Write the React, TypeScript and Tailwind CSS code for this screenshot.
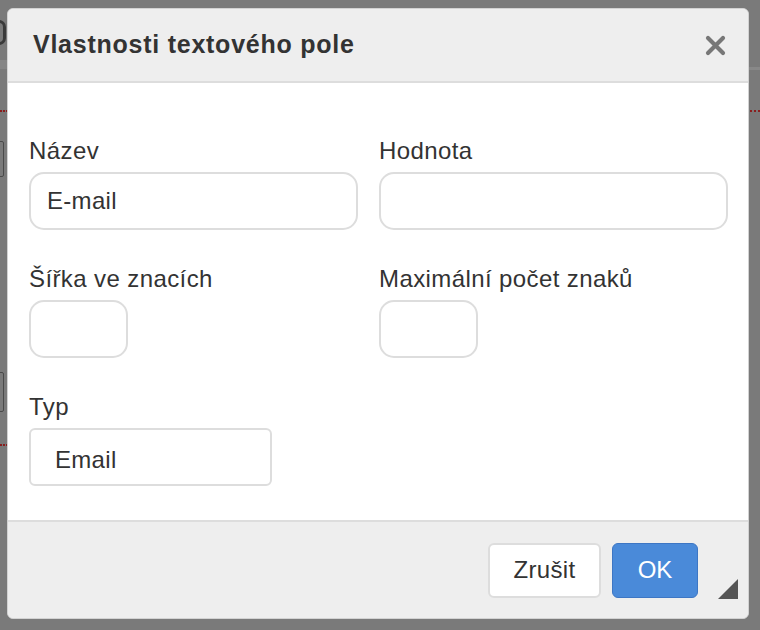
import React from "react";

const font = { fontFamily: '"Liberation Sans", Arial, sans-serif' };

function Field({
  label,
  value,
  className,
}: {
  label: string;
  value?: string;
  className: string;
}) {
  return (
    <div className="flex flex-col">
      <label className="h-[28px] leading-[28px] text-[24px] tracking-[0.4px] text-[#333333] mb-[7px]">
        {label}
      </label>
      <div
        className={`h-[58px] flex items-center bg-white border-2 border-[#dddddd] rounded-[15px] pl-[16px] text-[24px] tracking-[0.3px] text-[#333333] ${className}`}
      >
        {value}
      </div>
    </div>
  );
}

export default function App() {
  return (
    <div
      className="relative w-[760px] h-[630px] bg-[#7a7a7a] overflow-hidden pt-[8px] pl-[7px]"
      style={font}
    >
      {/* page behind the overlay */}
      <div className="absolute left-0 top-[60px] w-[8px] h-[9px] bg-[#858585]" />
      <div className="absolute right-0 top-[67px] w-[12px] h-[3px] bg-[#888888]" />
      <div className="absolute left-0 top-[110px] w-[8px] border-t-2 border-dotted border-[#8a1e1e]" />
      <div className="absolute right-0 top-[110px] w-[10px] border-t-2 border-dotted border-[#8a1e1e]" />
      <div className="absolute left-[-6px] top-[141px] w-[10px] h-[36px] border border-[#4a4a4a] rounded-[2px]" />
      <div className="absolute left-[-6px] top-[372px] w-[10px] h-[40px] border border-[#4a4a4a] rounded-[2px]" />
      <div className="absolute left-0 top-[444px] w-[8px] border-t-2 border-dotted border-[#8a1e1e]" />
      <div className="absolute left-[-8px] top-[20px] w-[14px] h-[25px] rounded-full border-[3px] border-[#3a3a3a]" />

      {/* dialog */}
      <div className="relative w-[742px] h-[611px] flex flex-col rounded-[6px] border border-[#d2d2d2] bg-[#eeeeee] overflow-hidden">
        <div className="h-[74px] shrink-0 flex items-center justify-between pl-[25px] pr-[22px] bg-[#eeeeee] border-b-2 border-[#dddddd]">
          <h1 className="text-[25px] font-bold tracking-[0.75px] text-[#333333]">
            Vlastnosti textového pole
          </h1>
          <button className="w-[22px] h-[22px] flex items-center justify-center">
            <svg width="21" height="21" viewBox="0 0 21 21">
              <path
                d="M3 3 L18 18 M18 3 L3 18"
                stroke="#777777"
                strokeWidth="4.2"
                strokeLinecap="round"
              />
            </svg>
          </button>
        </div>

        <div className="flex-1 bg-white pt-[54px] pl-[21px] pr-[20px]">
          <div className="grid grid-cols-[350px_349px] gap-y-[35px]">
            <Field label="Název" value="E-mail" className="w-[329px]" />
            <Field label="Hodnota" className="w-full" />
            <Field label="Šířka ve znacích" className="w-[99px]" />
            <Field label="Maximální počet znaků" className="w-[99px]" />
            <div className="flex flex-col">
              <label className="h-[28px] leading-[28px] text-[24px] tracking-[0.4px] text-[#333333] mb-[7px]">
                Typ
              </label>
              <div className="w-[243px] h-[58px] flex items-center bg-white border-2 border-[#dddddd] rounded-[6px] pl-[24px] pt-[6px] text-[24px] tracking-[0.3px] text-[#333333]">
                Email
              </div>
            </div>
          </div>
        </div>

        <div className="h-[98px] shrink-0 flex items-center justify-end gap-[11px] pr-[50px] bg-[#eeeeee] border-t-2 border-[#dddddd]">
          <button className="w-[113px] h-[55px] bg-white border-2 border-[#dddddd] rounded-[6px] text-[24px] tracking-[0.3px] text-[#333333]">
            Zrušit
          </button>
          <button className="w-[86px] h-[55px] bg-[#4a8ad9] border border-[#3d76c4] rounded-[6px] text-[24px] text-white">
            OK
          </button>
        </div>

        <svg
          className="absolute right-[10px] bottom-[19px]"
          width="20"
          height="20"
          viewBox="0 0 20 20"
        >
          <path d="M20 0 L20 20 L0 20 Z" fill="#555555" />
        </svg>
      </div>
    </div>
  );
}
